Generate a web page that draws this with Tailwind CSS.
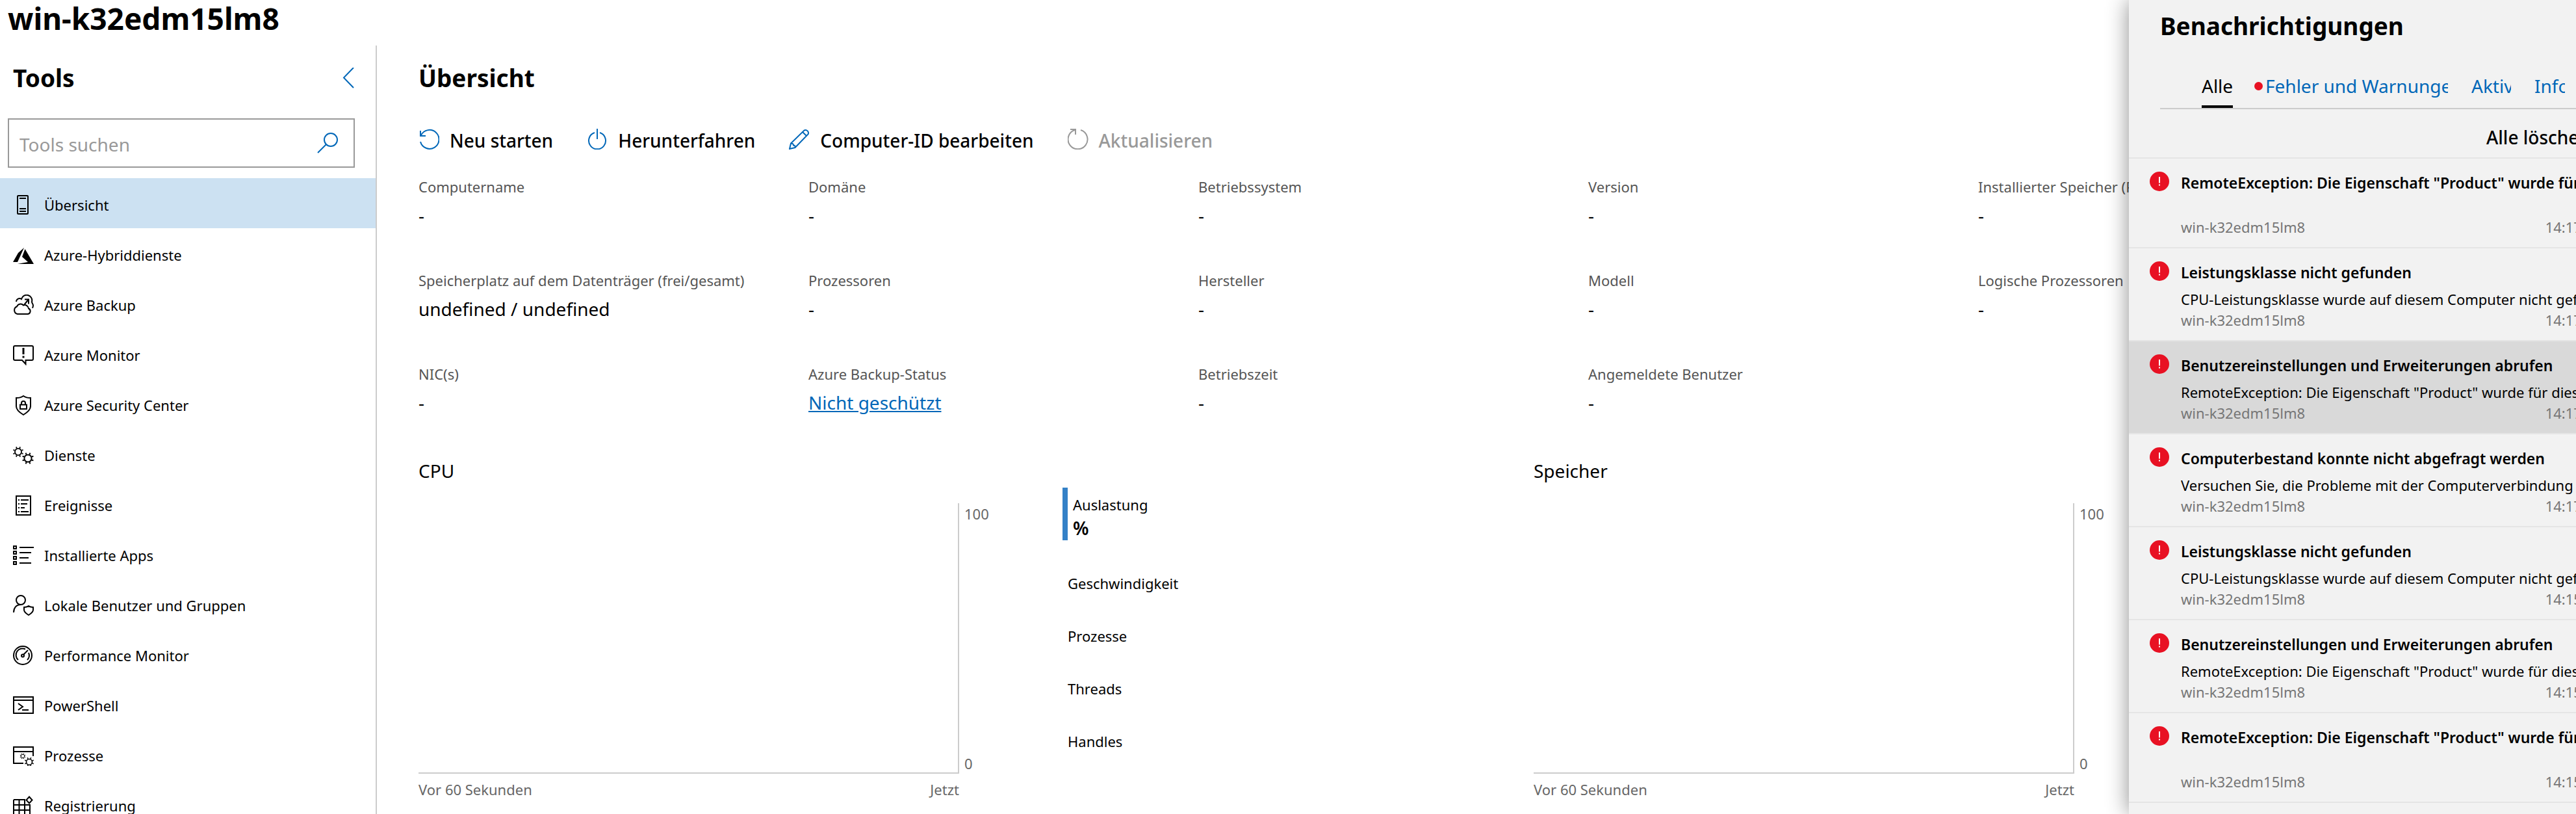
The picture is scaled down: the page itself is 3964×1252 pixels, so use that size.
<!DOCTYPE html>
<html lang="de">

<head>
    <meta charset="UTF-8">
    <meta name="viewport" content="width=device-width, initial-scale=1.0">
    <script src="https://cdn.jsdelivr.net/npm/@tailwindcss/browser@4"></script>
    <title>win-k32edm15lm8 - Übersicht</title>
    <style>
        body {
            font-family: 'Segoe UI', 'Noto Sans', 'Open Sans', sans-serif;
        }
    </style>
</head>

<body class="relative flex h-screen flex-col overflow-hidden bg-white text-[22px] leading-8 text-black">
    <!-- shared symbols -->
    <svg class="hidden">
        <symbol id="gear" viewBox="-10 -10 20 20">
            <circle r="5.6" fill="none" stroke="currentColor" stroke-width="2" />
            <g stroke="currentColor" stroke-width="2">
                <path d="M2.5 6 3.4 8.4M-2.5 6-3.4 8.4M2.5-6 3.4-8.4M-2.5-6-3.4-8.4M6 2.5 8.4 3.4M6-2.5 8.4-3.4M-6 2.5-8.4 3.4M-6-2.5-8.4-3.4" />
            </g>
        </symbol>
        <symbol id="error" viewBox="0 0 30 30">
            <circle cx="15" cy="15" r="15" fill="#e81123" />
            <path d="M15 8v9.500M15 19.500v2" stroke="#fff" stroke-width="2" />
        </symbol>
    </svg>

    <header class="h-[70px] shrink-0 px-3">
        <h1 class="text-[46px] leading-[56px] font-bold">win-k32edm15lm8</h1>
    </header>

    <div class="flex min-h-0 flex-1">
        <!-- Tools -->
        <aside class="w-[580px] shrink-0 overflow-hidden border-r-2 border-[#ccc]">
            <div class="flex items-center justify-between pt-[30px] pr-8 pb-3 pl-5">
                <h2 class="text-[37px] leading-10 font-bold">Tools</h2>
                <button type="button" aria-label="Tools einklappen" class="text-[#0067b8]">
                    <svg class="h-8 w-5" viewBox="0 0 20 32" fill="none" stroke="currentColor" stroke-width="2"><path d="M18 0 3 15.500 18 31" /></svg>
                </button>
            </div>
            <form class="mx-3 mt-[30px] mr-8 flex h-[76px] items-center border-2 border-[#999] pr-6 pl-4">
                <input type="search" aria-label="Tools suchen" placeholder="Tools suchen" class="min-w-0 flex-1 pt-1 text-[28px] leading-10 outline-none placeholder:text-[#999]">
                <button type="button" aria-label="Suchen" class="text-[#0067b8]">
                    <svg class="size-8" viewBox="0 0 32 32" fill="none" stroke="currentColor" stroke-width="2"><circle cx="21" cy="11" r="10" /><path d="M14 18 1 31" /></svg>
                </button>
            </form>
            <nav class="mt-4">
                <a href="#" class="flex h-[77px] items-center gap-4 bg-[#cce1f2] pt-1 pl-5">
                    <svg class="size-8" viewBox="0 0 32 32" fill="none" stroke="currentColor" stroke-width="2"><rect x="7" y="2" width="16" height="28" rx="1" /><path d="M10 6h10M10 22h10M10 26h10" /></svg>
                    Übersicht
                </a>
                <a href="#" class="flex h-[77px] items-center gap-4 pt-1 pl-5">
                    <svg class="size-8" viewBox="0 0 32 32" fill="currentColor"><path d="M17 5 8 13 0 27h7zM18.500 7 14 19l9 8-16 3h25z" /></svg>
                    Azure-Hybriddienste
                </a>
                <a href="#" class="flex h-[77px] items-center gap-4 pt-1 pl-5">
                    <svg class="size-8" viewBox="0 0 32 32" fill="none" stroke="currentColor" stroke-width="2"><path d="M7 30a6 6 0 0 1-1-11.500 6 6 0 0 1 10-2 6 6 0 0 1 8 5 4.500 4.500 0 0 1-1 8.500zM5 11a5 5 0 0 1 8-4 8 8 0 0 1 16 4c0 3 2 3 2 6 0 1-.5 3-1.500 3.500M17 16l6.500-8M18 7.500h6v7" /></svg>
                    Azure Backup
                </a>
                <a href="#" class="flex h-[77px] items-center gap-4 pt-1 pl-5">
                    <svg class="size-8" viewBox="0 0 32 32" fill="none" stroke="currentColor" stroke-width="2"><path d="M3 2h26a2 2 0 0 1 2 2v18a2 2 0 0 1-2 2h-9.500v6L14 24H3a2 2 0 0 1-2-2V4a2 2 0 0 1 2-2z" /><path d="M16 5v10M16 17.500v3" stroke-width="3" /></svg>
                    Azure Monitor
                </a>
                <a href="#" class="flex h-[77px] items-center gap-4 pt-1 pl-5">
                    <svg class="size-8" viewBox="0 0 32 32" fill="none" stroke="currentColor" stroke-width="2"><path d="M16 2c3 2 7 3 11 3v13c0 6-6 10-11 13-5-3-11-7-11-13V5c4 0 8-1 11-3z" /><path d="M11 15.500h10V22H11zM13 15v-2a3 3 0 0 1 6 0v2" /></svg>
                    Azure Security Center
                </a>
                <a href="#" class="flex h-[77px] items-center gap-4 pt-1 pl-5">
                    <svg class="size-8" viewBox="0 0 32 32"><use href="#gear" x="-1" y="2" width="18" height="18" /><use href="#gear" x="13" y="11" width="20" height="20" /></svg>
                    Dienste
                </a>
                <a href="#" class="flex h-[77px] items-center gap-4 pt-1 pl-5">
                    <svg class="size-8" viewBox="0 0 32 32" fill="none" stroke="currentColor" stroke-width="2"><path d="M5 2h22v29H5zM8 8h2M12 8h12M8 14h2M12 14h10M8 20h2M12 20h6M8 26h2M12 26h12" /></svg>
                    Ereignisse
                </a>
                <a href="#" class="flex h-[77px] items-center gap-4 pt-1 pl-5">
                    <svg class="size-8" viewBox="0 0 32 32" fill="none" stroke="currentColor" stroke-width="2"><path d="M1 2h4v4H1zM1 10h4v4H1zM1 18h4v4H1zM1 26h4v4H1zM10 4h22M10 12h18M10 20h14M10 28h18" /></svg>
                    Installierte Apps
                </a>
                <a href="#" class="flex h-[77px] items-center gap-4 pt-1 pl-5">
                    <svg class="size-8" viewBox="0 0 32 32" fill="none" stroke="currentColor" stroke-width="2"><circle cx="12" cy="8" r="7" /><path d="M1 27c0-7 4-12 11-12M24 17c2 1.500 4 2 7 2v4c0 4-4 6-7 8-3-2-7-4-7-8v-4c3 0 5-.5 7-2z" /></svg>
                    Lokale Benutzer und Gruppen
                </a>
                <a href="#" class="flex h-[77px] items-center gap-4 pt-1 pl-5">
                    <svg class="size-8" viewBox="0 0 32 32" fill="none" stroke="currentColor" stroke-width="2"><circle cx="15" cy="16" r="14" /><path d="M8 23a10 10 0 0 1 11-16.500M24 12a10 10 0 0 1-2 11M16 15l7-7" /><circle cx="15" cy="16.500" r="2" /></svg>
                    Performance Monitor
                </a>
                <a href="#" class="flex h-[77px] items-center gap-4 pt-1 pl-5">
                    <svg class="size-8" viewBox="0 0 32 32" fill="none" stroke="currentColor" stroke-width="2"><path d="M1 3h30v25H1zM1 8h30M8 13l7 5-7 5M14 23h10" /></svg>
                    PowerShell
                </a>
                <a href="#" class="flex h-[77px] items-center gap-4 pt-1 pl-5">
                    <svg class="size-8" viewBox="0 0 32 32" fill="none" stroke="currentColor" stroke-width="2"><path d="M31 17V3H1v25h15M1 10h30" /><use href="#gear" x="10" y="12" width="10" height="10" /><use href="#gear" x="17" y="18" width="16" height="16" /></svg>
                    Prozesse
                </a>
                <a href="#" class="flex h-[77px] items-center gap-4 pt-1 pl-5">
                    <svg class="size-8" viewBox="0 0 32 32" fill="none" stroke="currentColor" stroke-width="2"><path d="M1 7h17v24M1 7v24h25V15H1M9.500 7v24M1 23h25M25 2.500l4.500 5-4.500 5-4.500-5z" /></svg>
                    Registrierung
                </a>
            </nav>
        </aside>

        <!-- Übersicht -->
        <main class="min-w-0 flex-1 overflow-hidden pt-[30px] pl-16">
            <h2 class="text-[37px] leading-10 font-bold">Übersicht</h2>
            <div class="mt-[58px] flex gap-[52px] text-[28px] leading-8 font-medium">
                <button type="button" class="flex items-start gap-4">
                    <svg class="size-8 text-[#0067b8]" viewBox="0 0 32 32" fill="none" stroke="currentColor" stroke-width="2"><path d="M3 20A14.500 14.500 0 1 0 4 10M3 3v8h8" /></svg>
                    <span class="pt-0.5">Neu starten</span>
                </button>
                <button type="button" class="flex items-start gap-4">
                    <svg class="size-8 text-[#0067b8]" viewBox="0 0 32 32" fill="none" stroke="currentColor" stroke-width="2"><path d="M16 0v16M12 6a13 13 0 1 0 8 0" /></svg>
                    <span class="pt-0.5">Herunterfahren</span>
                </button>
                <button type="button" class="flex items-start gap-4">
                    <svg class="size-8 text-[#0067b8]" viewBox="0 0 32 32" fill="none" stroke="currentColor" stroke-width="2"><path d="M1 31 3 22.500 23.500 2.500a4.500 4.500 0 0 1 6 6L9.500 29zM21 5l6 6M3 22.500c3 0 4 1 4 3 2 0 3 1 2.500 3.500" /></svg>
                    <span class="pt-0.5">Computer-ID bearbeiten</span>
                </button>
                <button type="button" disabled class="flex items-start gap-4 text-[#999]">
                    <svg class="size-8" viewBox="0 0 32 32" fill="none" stroke="currentColor" stroke-width="2"><path d="M20 2A15 15 0 1 1 11 2M4 1h8v8" /></svg>
                    <span class="pt-0.5">Aktualisieren</span>
                </button>
            </div>

            <dl class="mt-[39px] mb-px grid auto-rows-[144px] grid-cols-[repeat(auto-fill,600px)] whitespace-nowrap">
                <div>
                    <dt class="text-[#555]">Computername</dt>
                    <dd class="mt-3 text-[28px] leading-8">-</dd>
                </div>
                <div>
                    <dt class="text-[#555]">Domäne</dt>
                    <dd class="mt-3 text-[28px] leading-8">-</dd>
                </div>
                <div>
                    <dt class="text-[#555]">Betriebssystem</dt>
                    <dd class="mt-3 text-[28px] leading-8">-</dd>
                </div>
                <div>
                    <dt class="text-[#555]">Version</dt>
                    <dd class="mt-3 text-[28px] leading-8">-</dd>
                </div>
                <div>
                    <dt class="text-[#555]">Installierter Speicher (RAM)</dt>
                    <dd class="mt-3 text-[28px] leading-8">-</dd>
                </div>
                <div>
                    <dt class="text-[#555]">Speicherplatz auf dem Datenträger (frei/gesamt)</dt>
                    <dd class="mt-3 text-[28px] leading-8">undefined / undefined</dd>
                </div>
                <div>
                    <dt class="text-[#555]">Prozessoren</dt>
                    <dd class="mt-3 text-[28px] leading-8">-</dd>
                </div>
                <div>
                    <dt class="text-[#555]">Hersteller</dt>
                    <dd class="mt-3 text-[28px] leading-8">-</dd>
                </div>
                <div>
                    <dt class="text-[#555]">Modell</dt>
                    <dd class="mt-3 text-[28px] leading-8">-</dd>
                </div>
                <div>
                    <dt class="text-[#555]">Logische Prozessoren</dt>
                    <dd class="mt-3 text-[28px] leading-8">-</dd>
                </div>
                <div>
                    <dt class="text-[#555]">NIC(s)</dt>
                    <dd class="mt-3 text-[28px] leading-8">-</dd>
                </div>
                <div>
                    <dt class="text-[#555]">Azure Backup-Status</dt>
                    <dd class="mt-3 text-[28px] leading-8"><a href="#" class="text-[#0067b8] underline">Nicht geschützt</a></dd>
                </div>
                <div>
                    <dt class="text-[#555]">Betriebszeit</dt>
                    <dd class="mt-3 text-[28px] leading-8">-</dd>
                </div>
                <div>
                    <dt class="text-[#555]">Angemeldete Benutzer</dt>
                    <dd class="mt-3 text-[28px] leading-8">-</dd>
                </div>
            </dl>

            <div class="grid grid-cols-[repeat(2,minmax(1716px,1fr))]">
                <section>
                    <h3 class="text-[28px] leading-10">CPU</h3>
                    <div class="flex">
                        <div class="w-[832px] pt-[30px] text-[#666]">
                            <div class="h-[416px] border-r-2 border-b-2 border-[#ccc]"></div>
                            <div class="mt-2 flex justify-between"><span>Vor 60 Sekunden</span><span>Jetzt</span></div>
                        </div>
                        <div class="mt-[30px] flex h-[416px] w-[159px] flex-col justify-between pl-2 text-[#666]"><span>100</span><span>0</span></div>
                        <ul class="pt-[6px]">
                            <li class="h-[81px] border-l-8 border-[#3481c7] pt-[10px] pl-2">Auslastung<strong class="mt-1 block text-[28px] leading-8 font-semibold">%</strong></li>
                            <li class="h-[81px] pt-[50px] pl-2">Geschwindigkeit</li>
                            <li class="h-[81px] pt-[50px] pl-2">Prozesse</li>
                            <li class="h-[81px] pt-[50px] pl-2">Threads</li>
                            <li class="h-[81px] pt-[50px] pl-2">Handles</li>
                        </ul>
                    </div>
                </section>
                <section>
                    <h3 class="text-[28px] leading-10">Speicher</h3>
                    <div class="flex">
                        <div class="w-[832px] pt-[30px] text-[#666]">
                            <div class="h-[416px] border-r-2 border-b-2 border-[#ccc]"></div>
                            <div class="mt-2 flex justify-between"><span>Vor 60 Sekunden</span><span>Jetzt</span></div>
                        </div>
                        <div class="mt-[30px] flex h-[416px] w-[159px] flex-col justify-between pl-2 text-[#666]"><span>100</span><span>0</span></div>
                    </div>
                </section>
            </div>
        </main>
    </div>

    <aside class="absolute inset-y-0 -right-[72px] w-[760px] bg-[#f2f2f2] whitespace-nowrap shadow-[0_0_32px_rgba(0,0,0,0.45)]">
        <h2 class="pt-5 pl-12 text-[37px] leading-10 font-bold">Benachrichtigungen</h2>
        <div role="tablist" class="mt-[38px] ml-12 flex gap-9 border-b-2 border-[#ccc] pl-16 text-[28px] leading-[68px] text-[#0067b8]">
            <button type="button" role="tab" aria-selected="true" class="w-12 overflow-hidden text-left text-black shadow-[inset_0_-4px_0_#000]">Alle</button>
            <button type="button" role="tab" class="relative w-[295px] pl-[14px] text-left">
                <span class="absolute top-7 -left-[3px] size-[13px] rounded-full bg-[#e81123]"></span>
                <span class="block overflow-hidden">Fehler und Warnungen</span>
            </button>
            <button type="button" role="tab" class="w-[61px] overflow-hidden text-left">Aktiv</button>
            <button type="button" role="tab" class="w-[47px] overflow-hidden text-left">Info</button>
        </div>
        <div class="flex justify-end border-b-2 border-[#e5e5e5] pt-[23px] pr-[50px] pb-[11px]">
            <button type="button" class="text-[28px] leading-10 font-medium">Alle löschen</button>
        </div>
        <ul>
            <li class="flex gap-[18px] border-b-2 border-[#e5e5e5] px-8 pt-5 pb-[15px]">
                <svg class="size-[30px] shrink-0"><use href="#error" /></svg>
                <div class="min-w-0 flex-1">
                    <h4 class="mt-px overflow-hidden text-[23px] font-semibold">RemoteException: Die Eigenschaft "Product" wurde für dieses Objekt nicht gefunden.</h4>
                    <p class="mt-[9px] min-h-[27px] overflow-hidden"></p>
                    <p class="flex justify-between text-[#767676]"><span>win-k32edm15lm8</span><time>14:17:23</time></p>
                </div>
            </li>
            <li class="flex gap-[18px] border-b-2 border-[#e5e5e5] px-8 pt-5 pb-[15px]">
                <svg class="size-[30px] shrink-0"><use href="#error" /></svg>
                <div class="min-w-0 flex-1">
                    <h4 class="mt-px overflow-hidden text-[23px] font-semibold">Leistungsklasse nicht gefunden</h4>
                    <p class="mt-[9px] min-h-[27px] overflow-hidden">CPU-Leistungsklasse wurde auf diesem Computer nicht gefunden.</p>
                    <p class="flex justify-between text-[#767676]"><span>win-k32edm15lm8</span><time>14:17:23</time></p>
                </div>
            </li>
            <li class="flex gap-[18px] border-b-2 border-[#e5e5e5] bg-[#d9d9d9] px-8 pt-5 pb-[15px]">
                <svg class="size-[30px] shrink-0"><use href="#error" /></svg>
                <div class="min-w-0 flex-1">
                    <h4 class="mt-px overflow-hidden text-[23px] font-semibold">Benutzereinstellungen und Erweiterungen abrufen</h4>
                    <p class="mt-[9px] min-h-[27px] overflow-hidden">RemoteException: Die Eigenschaft "Product" wurde für dieses Objekt nicht gefunden.</p>
                    <p class="flex justify-between text-[#767676]"><span>win-k32edm15lm8</span><time>14:17:23</time></p>
                </div>
            </li>
            <li class="flex gap-[18px] border-b-2 border-[#e5e5e5] px-8 pt-5 pb-[15px]">
                <svg class="size-[30px] shrink-0"><use href="#error" /></svg>
                <div class="min-w-0 flex-1">
                    <h4 class="mt-px overflow-hidden text-[23px] font-semibold">Computerbestand konnte nicht abgefragt werden</h4>
                    <p class="mt-[9px] min-h-[27px] overflow-hidden">Versuchen Sie, die Probleme mit der Computerverbindung zu beheben.</p>
                    <p class="flex justify-between text-[#767676]"><span>win-k32edm15lm8</span><time>14:17:23</time></p>
                </div>
            </li>
            <li class="flex gap-[18px] border-b-2 border-[#e5e5e5] px-8 pt-5 pb-[15px]">
                <svg class="size-[30px] shrink-0"><use href="#error" /></svg>
                <div class="min-w-0 flex-1">
                    <h4 class="mt-px overflow-hidden text-[23px] font-semibold">Leistungsklasse nicht gefunden</h4>
                    <p class="mt-[9px] min-h-[27px] overflow-hidden">CPU-Leistungsklasse wurde auf diesem Computer nicht gefunden.</p>
                    <p class="flex justify-between text-[#767676]"><span>win-k32edm15lm8</span><time>14:15:23</time></p>
                </div>
            </li>
            <li class="flex gap-[18px] border-b-2 border-[#e5e5e5] px-8 pt-5 pb-[15px]">
                <svg class="size-[30px] shrink-0"><use href="#error" /></svg>
                <div class="min-w-0 flex-1">
                    <h4 class="mt-px overflow-hidden text-[23px] font-semibold">Benutzereinstellungen und Erweiterungen abrufen</h4>
                    <p class="mt-[9px] min-h-[27px] overflow-hidden">RemoteException: Die Eigenschaft "Product" wurde für dieses Objekt nicht gefunden.</p>
                    <p class="flex justify-between text-[#767676]"><span>win-k32edm15lm8</span><time>14:15:23</time></p>
                </div>
            </li>
            <li class="flex gap-[18px] border-b-2 border-[#e5e5e5] px-8 pt-5 pb-[15px]">
                <svg class="size-[30px] shrink-0"><use href="#error" /></svg>
                <div class="min-w-0 flex-1">
                    <h4 class="mt-px overflow-hidden text-[23px] font-semibold">RemoteException: Die Eigenschaft "Product" wurde für dieses Objekt nicht gefunden.</h4>
                    <p class="mt-[9px] min-h-[27px] overflow-hidden"></p>
                    <p class="flex justify-between text-[#767676]"><span>win-k32edm15lm8</span><time>14:15:23</time></p>
                </div>
            </li>
        </ul>
    </aside>
</body>

</html>
